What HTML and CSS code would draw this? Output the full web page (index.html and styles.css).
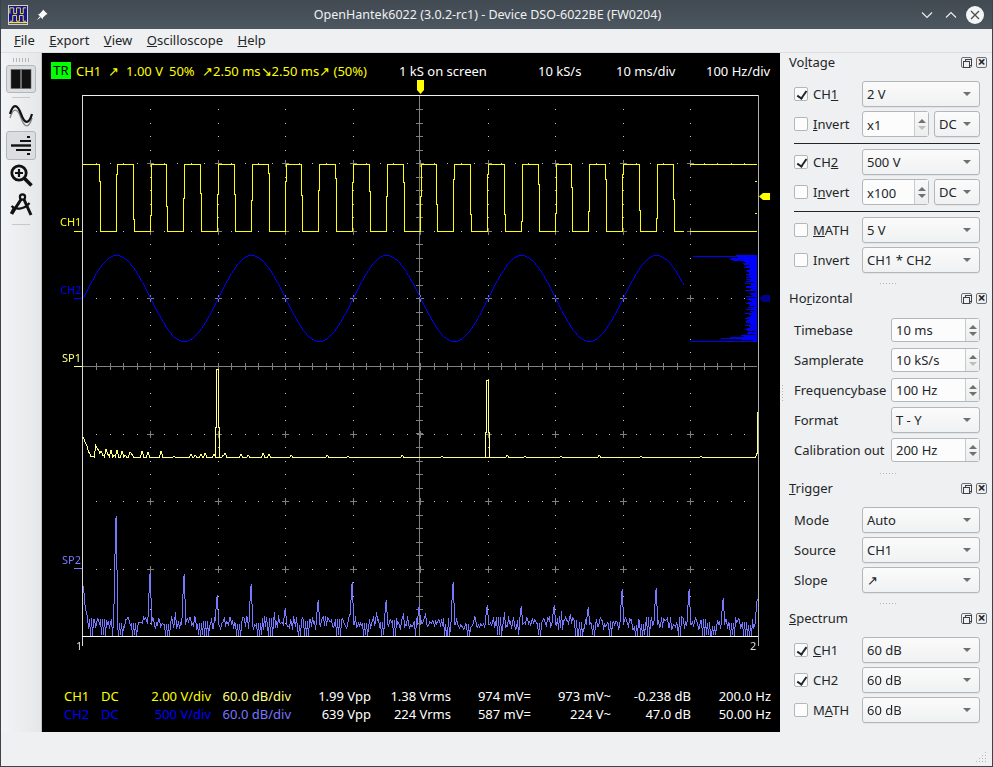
FILE: index.html
```html
<!DOCTYPE html>
<html lang="en">
<head>
  <meta charset="UTF-8" />
  <meta name="viewport" content="width=device-width, initial-scale=1.0"/>
  <title>OpenHantek6022</title>
  <link rel="stylesheet" href="styles.css">
</head>
<body>
  <div class="window">
    <div class="titlebar">
      <svg class="app-logo" width="20" height="20" viewBox="0 0 21 21">
        <rect x="0.5" y="0.5" width="20" height="20" fill="#14148c" stroke="#d8d8d8"/>
        <path d="M2 9V3h4v6h3V3h4v6h3V3h3" fill="none" stroke="#f4e04d" stroke-width="1"/>
        <path d="M2 17h3v-6h4v6h3v-6h4v6h3" fill="none" stroke="#f4e04d" stroke-width="1"/>
        <path d="M1 18.5h19" stroke="#f4e04d" stroke-width="1.5"/>
      </svg>
      <svg class="pin" width="12" height="12" viewBox="0 0 12 12">
        <path d="M7 0.5l4.5 4.5-1.2.6-3.3 3-.4 1.6L2 5.2l1.7-.4 3-3.3z" fill="#fcfcfc"/>
        <path d="M3.6 7.4L0.8 11.2l3.8-2.8z" fill="#fcfcfc"/>
      </svg>
      <div class="title-text">OpenHantek6022 (3.0.2-rc1) - Device DSO-6022BE (FW0204)</div>
      <svg class="win-btn" width="14" height="14" viewBox="0 0 14 14"><path d="M2 4.5l5 5 5-5" fill="none" stroke="#eff0f1" stroke-width="1.1"/></svg>
      <svg class="win-btn" width="14" height="14" viewBox="0 0 14 14"><path d="M2 9.5l5-5 5 5" fill="none" stroke="#eff0f1" stroke-width="1.1"/></svg>
      <svg class="win-close" width="18" height="18" viewBox="0 0 18 18">
        <circle cx="9" cy="9" r="9" fill="#f4f5f5"/>
        <path d="M5 5l8 8M13 5l-8 8" stroke="#475057" stroke-width="1.3"/>
      </svg>
    </div>

    <div class="menubar">
      <span class="menu-item"><u>F</u>ile</span>
      <span class="menu-item"><u>E</u>xport</span>
      <span class="menu-item"><u>V</u>iew</span>
      <span class="menu-item"><u>O</u>scilloscope</span>
      <span class="menu-item"><u>H</u>elp</span>
    </div>

    <div class="main">
      <div class="left-col">
        <div class="workspace">
          <div class="toolbar">
            <div class="tool-handle"></div>
            <div class="tool-btn checked">
              <svg width="22" height="22" viewBox="0 0 22 22">
                <rect x="1" y="1.5" width="9.5" height="19" fill="#111" stroke="#666" stroke-width="0.6"/>
                <rect x="11.5" y="1.5" width="9.5" height="19" fill="#111" stroke="#666" stroke-width="0.6"/>
              </svg>
            </div>
            <div class="tool-sep"></div>
            <div class="tool-btn plain">
              <svg width="24" height="26" viewBox="0 0 24 26">
                <path d="M1 13C4 3 8 2 12 13s8 10 11 0" fill="none" stroke="#888" stroke-width="1.4" transform="translate(0 3)"/>
                <path d="M1 12C4 2 8 1 12 12s8 10 11 0" fill="none" stroke="#111" stroke-width="2.2"/>
              </svg>
            </div>
            <div class="tool-btn checked">
              <svg width="22" height="20" viewBox="0 0 22 20">
                <path d="M17 1h3M10 5h11M6 14h15M17 18h3" fill="none" stroke="#111" stroke-width="2"/>
                <path d="M1 9.5h20" fill="none" stroke="#111" stroke-width="2.4"/>
              </svg>
            </div>
            <div class="tool-btn small">
              <svg width="23" height="23" viewBox="0 0 23 23">
                <circle cx="9" cy="9" r="7.2" fill="none" stroke="#111" stroke-width="2.8"/>
                <path d="M9 5v8M5 9h8" stroke="#111" stroke-width="2.2"/>
                <path d="M14.5 14.5l7 7" stroke="#111" stroke-width="3.6"/>
              </svg>
            </div>
            <div class="tool-btn small">
              <svg width="23" height="25" viewBox="0 0 23 25">
                <circle cx="12.5" cy="6" r="2.6" fill="none" stroke="#111" stroke-width="2.2"/>
                <path d="M11 8.5L2.5 21.5M14 8.5L21 24" fill="none" stroke="#111" stroke-width="3"/>
                <path d="M1.5 15c4 4 12 4 18-3" fill="none" stroke="#111" stroke-width="2.2"/>
                <path d="M1.5 23l3-6" fill="none" stroke="#111" stroke-width="3.6"/>
              </svg>
            </div>
            <div class="tool-sep"></div>
          </div>

          <div class="scope">
            <div class="scope-head">
              <span class="tr-box">TR</span>
              <span class="ch1-color">CH1</span>
              <span class="ch1-color">↗</span>
              <span class="ch1-color">1.00 V</span>
              <span class="ch1-color">50%</span>
              <span class="ch1-color">↗2.50 ms↘2.50 ms↗ (50%)</span>
              <span>1 kS on screen</span>
              <span>10 kS/s</span>
              <span>10 ms/div</span>
              <span>100 Hz/div</span>
            </div>
            <div class="plot">
              <canvas id="plot" width="738" height="608"></canvas>
              <span class="plot-label lbl-ch1">CH1</span>
              <span class="plot-label lbl-ch2">CH2</span>
              <span class="plot-label lbl-sp1">SP1</span>
              <span class="plot-label lbl-sp2">SP2</span>
              <span class="plot-label lbl-m1">1</span>
              <span class="plot-label lbl-m2">2</span>
            </div>
            <div class="measure">
              <span class="ch1-color">CH1</span><span class="ch1-color">DC</span>
              <span class="num ch1-color">2.00 V/div</span><span class="num sp1-color">60.0 dB/div</span>
              <span class="num">1.99 Vpp</span><span class="num">1.38 Vrms</span>
              <span class="num">974 mV=</span><span class="num">973 mV~</span>
              <span class="num">-0.238 dB</span><span class="num">200.0 Hz</span>

              <span class="ch2-color">CH2</span><span class="ch2-color">DC</span>
              <span class="num ch2-color">500 V/div</span><span class="num sp2-color">60.0 dB/div</span>
              <span class="num">639 Vpp</span><span class="num">224 Vrms</span>
              <span class="num">587 mV=</span><span class="num">224 V~</span>
              <span class="num">47.0 dB</span><span class="num">50.00 Hz</span>
            </div>
          </div>
        </div>
        <div class="statusbar"></div>
      </div>

      <div class="dock">
        <div class="splitter-dots"></div>

        <div class="dock-title">
          <span>Vo<u>l</u>tage</span>
          <span class="dock-icons"><i class="dock-float"></i><i class="dock-close"></i></span>
        </div>
        <div class="form">
          <label class="check on"><i class="box"></i><span>CH<u>1</u></span></label>
          <div class="combo">2 V</div>
          <label class="check"><i class="box"></i><span><u>I</u>nvert</span></label>
          <div class="pair">
            <div class="spin tall"><span>x1</span><div class="spin-btns"><b class="up"></b><b class="down off"></b></div></div>
            <div class="combo">DC</div>
          </div>
          <div class="form-sep"></div>
          <label class="check on"><i class="box"></i><span>CH<u>2</u></span></label>
          <div class="combo">500 V</div>
          <label class="check"><i class="box"></i><span>I<u>n</u>vert</span></label>
          <div class="pair">
            <div class="spin tall"><span>x100</span><div class="spin-btns"><b class="up"></b><b class="down"></b></div></div>
            <div class="combo">DC</div>
          </div>
          <div class="form-sep"></div>
          <label class="check"><i class="box"></i><span><u>M</u>ATH</span></label>
          <div class="combo">5 V</div>
          <label class="check"><i class="box"></i><span>Invert</span></label>
          <div class="combo">CH1 * CH2</div>
        </div>
        <div class="dock-handle"></div>

        <div class="dock-title">
          <span>Ho<u>r</u>izontal</span>
          <span class="dock-icons"><i class="dock-float"></i><i class="dock-close"></i></span>
        </div>
        <div class="form wide-label">
          <span class="form-label">Timebase</span>
          <div class="spin"><span>10 ms</span><div class="spin-btns"><b class="up"></b><b class="down"></b></div></div>
          <span class="form-label">Samplerate</span>
          <div class="spin"><span>10 kS/s</span><div class="spin-btns"><b class="up"></b><b class="down off"></b></div></div>
          <span class="form-label">Frequencybase</span>
          <div class="spin"><span>100 Hz</span><div class="spin-btns"><b class="up"></b><b class="down"></b></div></div>
          <span class="form-label">Format</span>
          <div class="combo">T - Y</div>
          <span class="form-label">Calibration out</span>
          <div class="spin"><span>200 Hz</span><div class="spin-btns"><b class="up"></b><b class="down"></b></div></div>
        </div>
        <div class="dock-handle"></div>

        <div class="dock-title">
          <span><u>T</u>rigger</span>
          <span class="dock-icons"><i class="dock-float"></i><i class="dock-close"></i></span>
        </div>
        <div class="form">
          <span class="form-label">Mode</span>
          <div class="combo">Auto</div>
          <span class="form-label">Source</span>
          <div class="combo">CH1</div>
          <span class="form-label">Slope</span>
          <div class="combo">↗</div>
        </div>
        <div class="dock-handle"></div>

        <div class="dock-title">
          <span><u>S</u>pectrum</span>
          <span class="dock-icons"><i class="dock-float"></i><i class="dock-close"></i></span>
        </div>
        <div class="form">
          <label class="check on"><i class="box"></i><span><u>C</u>H1</span></label>
          <div class="combo">60 dB</div>
          <label class="check on"><i class="box"></i><span>CH2</span></label>
          <div class="combo">60 dB</div>
          <label class="check"><i class="box"></i><span>M<u>A</u>TH</span></label>
          <div class="combo">60 dB</div>
        </div>

        <svg class="grip" width="12" height="12" viewBox="0 0 12 12">
          <path d="M9 1h1v1H9zM6 4h1v1H6zM9 4h1v1H9zM3 7h1v1H3zM6 7h1v1H6zM9 7h1v1H9zM0 10h1v1H0zM3 10h1v1H3zM6 10h1v1H6zM9 10h1v1H9z" fill="#b4b7b9"/>
        </svg>
      </div>
    </div>
  </div>

  <script src="scope.js"></script>
</body>
</html>
```

FILE: styles.css
```css
* {
  box-sizing: border-box;
}
body {
  margin: 0;
  font-family: "Noto Sans", sans-serif;
  font-size: 13px;
  color: #232629;
  background: #eff0f1;
}
.window {
  height: 100vh;
  display: flex;
  flex-direction: column;
  border: 1px solid #3c444b;
  border-top: none;
  overflow: hidden;
}

/* title bar */
.titlebar {
  height: 29px;
  flex: none;
  display: flex;
  align-items: center;
  padding: 0 8px 0 7px;
  background: linear-gradient(#414a51, #4d5760);
  color: #eff0f1;
}
.app-logo {
  flex: none;
}
.pin {
  flex: none;
  margin-left: 8px;
}
.title-text {
  flex: 1;
  text-align: center;
  font-size: 12.5px;
  padding: 0 0 1px 7px;
}
.win-btn {
  flex: none;
  margin-right: 10px;
}
.win-close {
  flex: none;
  margin-left: -2px;
}

/* menu */
.menubar {
  height: 24px;
  flex: none;
  display: flex;
  align-items: center;
  padding: 0 0 2px 13px;
  gap: 14.5px;
  border-bottom: 1px solid #dcdee0;
}

.main {
  flex: 1;
  display: flex;
  min-height: 0;
}
.left-col {
  flex: 1;
  display: flex;
  flex-direction: column;
}
.workspace {
  height: 679px;
  display: flex;
}
.statusbar {
  flex: 1;
}

/* left toolbar */
.toolbar {
  width: 41px;
  flex: none;
  display: flex;
  flex-direction: column;
  align-items: center;
  padding-top: 5px;
  background: linear-gradient(90deg, #f2f3f4, #e6e7e9);
  border-right: 1px solid #bfc2c4;
}
.tool-handle {
  width: 16px;
  height: 4px;
  background: repeating-linear-gradient(90deg, #b4b7b9 0 1px, transparent 1px 3px);
  margin-bottom: 3px;
}
.tool-btn {
  width: 30px;
  height: 28px;
  flex: none;
  display: flex;
  align-items: center;
  justify-content: center;
}
.tool-btn.checked {
  background: #dcdde0;
  border: 1px solid #b4b7b9;
  border-radius: 3px;
}
.tool-btn.checked + .tool-sep {
  margin: 4px 0 3px;
}
.tool-btn.plain {
  margin-bottom: 2px;
}
.tool-btn.plain + .tool-btn.checked {
  height: 29px;
  margin-bottom: 1px;
}
.tool-sep {
  width: 18px;
  height: 1px;
  background: #c6c8ca;
}
.tool-btn.small + .tool-sep {
  margin-top: 7px;
}

/* scope */
.scope {
  flex: 1;
  background: #000;
  color: #fff;
  display: flex;
  flex-direction: column;
}
.scope-head {
  height: 27px;
  flex: none;
  display: grid;
  grid-template-columns: 25px 32px 18px 43px 33px 197px 139px 78px 90px 1fr;
  align-items: center;
  padding: 8px 0 0 9px;
  white-space: nowrap;
}
.tr-box {
  width: 20px;
  height: 17px;
  line-height: 17px;
  text-align: center;
  background: #00ff00;
  color: #000;
}
.ch1-color {
  color: #ffff00;
}
.ch2-color {
  color: #0000ff;
}
.sp1-color {
  color: #ffff80;
}
.sp2-color {
  color: #7777ff;
}
.plot {
  position: relative;
  height: 607px;
  flex: none;
}
#plot {
  display: block;
}
.plot-label {
  position: absolute;
  font-size: 11px;
  line-height: 14px;
}
.lbl-ch1 {
  left: 18px;
  top: 135px;
  color: #ffff00;
}
.lbl-ch2 {
  left: 18px;
  top: 203px;
  color: #0000ff;
}
.lbl-sp1 {
  left: 20px;
  top: 271px;
  color: #ffff80;
}
.lbl-sp2 {
  left: 20px;
  top: 473px;
  color: #7777ff;
}
.lbl-m1 {
  left: 34px;
  top: 559px;
  color: #ddd;
}
.lbl-m2 {
  left: 708px;
  top: 559px;
  color: #ddd;
}
.measure {
  flex: none;
  display: grid;
  grid-template-columns: 37px 30px repeat(8, 80px);
  grid-auto-rows: 18px;
  align-items: center;
  padding-left: 22px;
  white-space: nowrap;
}
.num {
  text-align: right;
}

/* right dock */
.dock {
  position: relative;
  width: 212px;
  flex: none;
}
.splitter-dots {
  position: absolute;
  left: 2px;
  top: 332px;
  width: 1px;
  height: 16px;
  background: repeating-linear-gradient(#b4b7b9 0 1px, transparent 1px 3px);
}
.dock-title {
  height: 18px;
  display: flex;
  align-items: center;
  justify-content: space-between;
  padding: 0 5px 0 9px;
}
.dock-icons {
  display: flex;
  gap: 4px;
}
.dock-float,
.dock-close {
  position: relative;
  display: block;
  width: 11px;
  height: 11px;
  border: 1px solid #6d7174;
  border-radius: 2px;
}
.dock-float::after {
  content: "";
  position: absolute;
  left: 1px;
  top: 3px;
  width: 5px;
  height: 5px;
  border: 1px solid #3c4043;
  box-shadow: 2px -2px 0 -1px #eff0f1, 2px -2px 0 0 #3c4043;
}
.dock-close::after {
  content: "×";
  position: absolute;
  left: 0;
  top: -4px;
  width: 9px;
  text-align: center;
  font-size: 14px;
  font-weight: bold;
  line-height: 16px;
  color: #232629;
}
.form {
  display: grid;
  grid-template-columns: 68px 118px;
  row-gap: 4px;
  align-items: center;
  margin: 10px 0 0 14px;
}
.form.wide-label {
  grid-template-columns: 97px 89px;
}
.form-sep {
  grid-column: 1 / -1;
  height: 1px;
  background: #232629;
  margin: 2px 0 1px;
}
.form > .check,
.form > .form-label {
  line-height: 26px;
  white-space: nowrap;
}
.dock-handle {
  height: 16px;
  padding-top: 10px;
}
.dock-handle::before {
  content: "";
  display: block;
  width: 17px;
  height: 1px;
  margin-left: 100px;
  background: repeating-linear-gradient(90deg, #b4b7b9 0 1px, transparent 1px 3px);
}
.check {
  display: flex;
  align-items: center;
  gap: 5px;
}
.box {
  position: relative;
  width: 14px;
  height: 14px;
  flex: none;
  background: #fcfcfc;
  border: 1px solid #b4b7b9;
  border-radius: 2px;
}
.check.on .box::after {
  content: "";
  position: absolute;
  left: 4px;
  top: 1px;
  width: 4px;
  height: 8px;
  border: solid #232629;
  border-width: 0 2px 2px 0;
  transform: rotate(35deg);
}
.combo {
  position: relative;
  height: 26px;
  line-height: 24px;
  padding-left: 4px;
  background: linear-gradient(#fbfbfb, #f0f1f2);
  border: 1px solid #b4b7b9;
  border-radius: 3px;
  box-shadow: 0 1px 0 #e2e3e4;
}
.combo::after {
  content: "";
  position: absolute;
  right: 8px;
  top: 10px;
  border: 4px solid transparent;
  border-top: 4px solid #6d7174;
  border-bottom: none;
}
.pair {
  display: flex;
  gap: 5px;
}
.pair .combo {
  flex: 1;
}
.spin {
  height: 24px;
  display: flex;
  justify-content: space-between;
  background: #fcfcfc;
  border: 1px solid #b4b7b9;
  border-radius: 3px;
}
.spin.tall {
  width: 67px;
  height: 26px;
}
.spin > span {
  padding-left: 4px;
  line-height: 22px;
}
.spin.tall > span {
  line-height: 26px;
}
.spin-btns {
  width: 14px;
  display: flex;
  flex-direction: column;
  align-items: center;
  justify-content: center;
  gap: 3px;
  background: linear-gradient(#f9f9f9, #eceded);
  border-left: 1px solid #c8cacc;
}
.spin-btns b {
  display: block;
  border: 4px solid transparent;
}
.spin-btns .up {
  border-bottom: 4px solid #6d7174;
  border-top: none;
}
.spin-btns .down {
  border-top: 4px solid #6d7174;
  border-bottom: none;
}
.spin-btns .down.off {
  border-top-color: #bcbec0;
}
.grip {
  position: absolute;
  right: 4px;
  bottom: 3px;
}
```

FILE: scope.js
```js
const canvas = document.getElementById('plot');
const ctx = canvas.getContext('2d');

// all drawing below is in window coordinates, the canvas sits at (42,80)
const OX = 42;
const OY = 80;
const LEFT = 82.5;
const TOP = 95.5;
const DIVX = 67.5;
const DIVY = 67.6;

const YELLOW = '#ffff00';
const BLUE = '#0000ff';
const SP1 = '#ffff80';
const SP2 = '#7777ff';

// seeded so every run draws the same noise
let seed = 6022;
function rnd() {
  seed = (seed * 1103515245 + 12345) & 0x7fffffff;
  return seed / 0x7fffffff;
}

function rect(x, y, w, h, color) {
  ctx.fillStyle = color;
  ctx.fillRect(x - OX, y - OY, w, h);
}

// aliased line, like the Qt scope widget draws
function line(x0, y0, x1, y1, color) {
  x0 = Math.round(x0); y0 = Math.round(y0);
  x1 = Math.round(x1); y1 = Math.round(y1);
  const dx = Math.abs(x1 - x0);
  const dy = -Math.abs(y1 - y0);
  const sx = x0 < x1 ? 1 : -1;
  const sy = y0 < y1 ? 1 : -1;
  let err = dx + dy;
  while (true) {
    rect(x0, y0, 1, 1, color);
    if (x0 === x1 && y0 === y1) break;
    const e2 = 2 * err;
    if (e2 >= dy) { err += dy; x0 += sx; }
    if (e2 <= dx) { err += dx; y0 += sy; }
  }
}

function polyline(points, color) {
  for (let i = 1; i < points.length; i++) {
    line(points[i - 1][0], points[i - 1][1], points[i][0], points[i][1], color);
  }
}

function drawGrid() {
  const right = Math.round(LEFT + 10 * DIVX);
  const grey = '#808080';
  const dot = '#c8c8c8';

  // dots
  for (let i = 1; i < 10; i++) {
    if (i === 5) continue;
    const x = Math.round(LEFT + i * DIVX);
    for (let j = 1; j < 40; j++) {
      if (j % 5 === 0) continue;
      rect(x, Math.round(TOP + j * DIVY / 5), 1, 1, dot);
    }
  }
  for (let j = 1; j < 8; j++) {
    if (j === 4) continue;
    const y = Math.round(TOP + j * DIVY);
    for (let i = 1; i < 50; i++) {
      if (i % 5 === 0) continue;
      rect(Math.round(LEFT + i * DIVX / 5), y, 1, 1, dot);
    }
  }

  // crosses
  for (let i = 1; i < 10; i++) {
    for (let j = 1; j < 8; j++) {
      const x = Math.round(LEFT + i * DIVX);
      const y = Math.round(TOP + j * DIVY);
      rect(x - 3, y, 7, 1, grey);
      rect(x, y - 3, 1, 7, grey);
    }
  }

  // centre axes with ticks
  const cx = Math.round(LEFT + 5 * DIVX) - 1;
  const cy = Math.round(TOP + 4 * DIVY);
  rect(83, cy, 674, 1, grey);
  rect(cx, 96, 1, 540, grey);
  for (let i = 1; i < 50; i++) {
    rect(Math.round(LEFT + i * DIVX / 5), cy - 3, 1, 7, grey);
  }
  for (let j = 1; j < 40; j++) {
    rect(cx - 3, Math.round(TOP + j * DIVY / 5), 7, 1, grey);
  }

  // frame
  rect(82, 95, right - 82 + 1, 1, '#f0f0f0');
  rect(82, 95, 1, 551, '#d8d8d8');
  rect(right, 95, 1, 551, '#b0b0b0');
}

function drawMarkers() {
  // small tick lines next to the channel names
  rect(74, 231, 8, 1, YELLOW);
  rect(74, 298, 8, 1, BLUE);
  rect(74, 366, 8, 1, SP1);
  rect(74, 568, 8, 1, SP2);

  function poly(points, color) {
    ctx.fillStyle = color;
    ctx.beginPath();
    points.forEach((p, i) => {
      if (i === 0) ctx.moveTo(p[0] - OX, p[1] - OY);
      else ctx.lineTo(p[0] - OX, p[1] - OY);
    });
    ctx.closePath();
    ctx.fill();
  }
  poly([[417, 80], [424, 80], [424, 90], [420.5, 94], [417, 90]], YELLOW);
  poly([[759, 196.5], [763, 193], [770, 193], [770, 200], [763, 200]], YELLOW);
  poly([[759, 298.5], [763, 295], [770, 295], [770, 302], [763, 302]], '#000088');
}

function drawCh1() {
  const HIGH = 164;
  const LOW = 231;
  const pts = [[83, HIGH]];
  let level = HIGH;
  for (let i = 0; i < 35; i++) {
    const x = Math.round(98.9 + 16.875 * i);
    const next = level === HIGH ? LOW : HIGH;
    const mid = HIGH + 8 + rnd() * 50;
    pts.push([x, level], [x, mid], [x + 1, mid], [x + 1, next]);
    level = next;
  }
  pts.push([683, level]);
  polyline(pts, YELLOW);

  // histogram part
  rect(690, 164, 67, 1, YELLOW);
  rect(690, 231, 67, 1, YELLOW);
  rect(755, 181, 2, 1, YELLOW);
  rect(755, 213, 2, 1, YELLOW);
}

function drawCh2() {
  const pts = [];
  for (let x = 83; x <= 683; x++) {
    pts.push([x, 298 - 43 * Math.sin(2 * Math.PI * (x - 82.5) / 135)]);
  }
  polyline(pts, BLUE);

  for (let y = 255; y <= 341; y++) {
    const u = Math.abs(y - 298) / 43;
    let len = 5 + rnd() * 7 + 14 * Math.pow(u, 6);
    if (rnd() < 0.15) len = 2 + rnd() * 2;
    rect(757 - Math.round(len), y, Math.round(len), 1, BLUE);
  }
  rect(743, 255, 14, 1, BLUE);
  rect(693, 256, 64, 1, BLUE);
  rect(731, 258, 26, 1, BLUE);
  rect(730, 259, 27, 1, BLUE);
  rect(733, 260, 24, 1, BLUE);
  rect(721, 338, 36, 1, BLUE);
  rect(730, 337, 27, 1, BLUE);
  rect(690, 341, 67, 1, BLUE);
}

function drawSpectrum1() {
  const BASE = 457;
  // bump heights read off the left part of the trace
  const bumps = {
    83: 20, 84: 17, 85: 14, 86: 12, 87: 10, 88: 5, 90: 1, 92: 1, 95: 13, 96: 10,
    97: 8, 99: 4, 100: 6, 102: 2, 105: 8, 107: 3, 110: 7, 113: 2, 116: 7, 121: 6,
    124: 2, 129: 5, 131: 3, 141: 6, 147: 5, 160: 6, 173: 1, 190: 3, 194: 2, 200: 3,
    204: 4, 213: 3, 222: 2, 224: 4, 240: 3, 247: 2, 262: 4, 268: 3, 290: 2, 326: 2,
    347: 1, 401: 2, 441: 1, 506: 2, 524: 1, 560: 1, 598: 2, 640: 1, 700: 1, 756: 4
  };
  const pts = [];
  for (let x = 83; x <= 757; x++) {
    pts.push([x, BASE - (bumps[x] || bumps[x - 1] || 0)]);
  }
  pts.push([757, 412]);
  polyline(pts, SP1);

  // the two peaks, narrow double line on a wider foot
  function peak(x, top, foot) {
    polyline([
      [x - 2, BASE], [x - 2, foot], [x - 1, foot], [x - 1, top], [x + 1, top],
      [x + 1, foot], [x + 2, foot], [x + 2, BASE]
    ], SP1);
  }
  peak(217, 369, 427);
  peak(487, 380, 432);
}

function drawSpectrum2() {
  const BASE = 636;
  const peaks = [
    [116, 516], [150, 572], [184, 574], [217, 595], [251, 584], [285, 608],
    [318, 600], [352, 582], [386, 600], [419, 605], [453, 582], [487, 605],
    [521, 606], [554, 605], [588, 607], [622, 589], [656, 588], [689, 589],
    [723, 598], [757, 599]
  ];
  const n = 757 - 83;
  const heights = [];
  let run = 0;
  let top = 12;
  for (let i = 0; i <= n; i++) {
    // short stretches that swing down to the baseline look like solid blocks
    if (run === 0 && rnd() < 0.09) {
      run = 3 + Math.floor(rnd() * 4);
      top = 10 + rnd() * 10;
    }
    let h;
    if (run > 0) {
      h = run % 2 === 0 ? top : rnd() * 2;
      run--;
    } else {
      h = 7 + rnd() * 13;
      if (rnd() > 0.97) h = 18 + rnd() * 7;
    }
    heights.push(h);
  }
  heights[0] = 50; heights[1] = 36; heights[2] = 27; heights[3] = 24;
  peaks.forEach(p => {
    const i = p[0] - 83;
    heights[i] = BASE - p[1];
    heights[i - 1] = BASE - p[1] - 2;
    if (i + 1 <= n) heights[i + 1] = 12;
    heights[i - 2] = Math.max(heights[i - 2], (BASE - p[1]) * 0.4);
  });
  polyline(heights.map((h, i) => [83 + i, BASE - h]), SP2);
}

drawGrid();
drawSpectrum1();
drawSpectrum2();
drawCh2();
drawCh1();
drawMarkers();
// bottom edge stays on top of the purple trace
rect(82, 636, 676, 1, '#ffffff');
```
